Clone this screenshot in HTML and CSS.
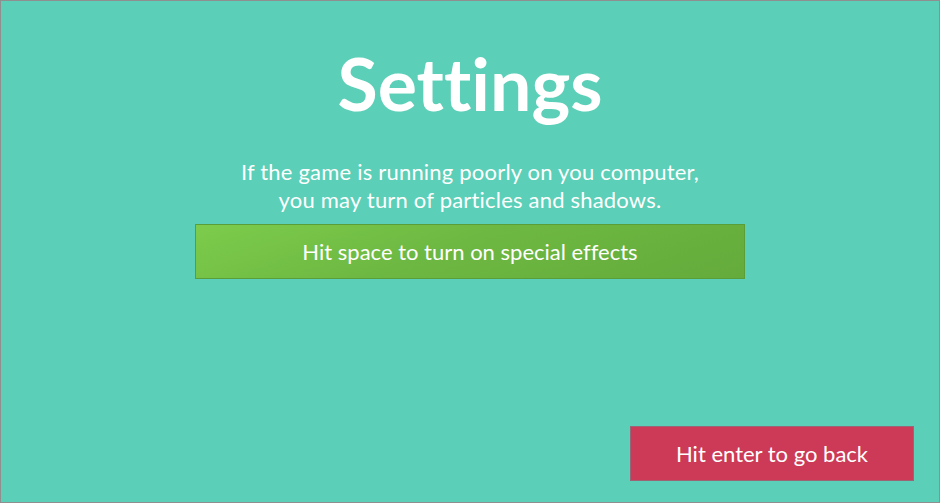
FILE: index.html
```html
<!DOCTYPE html>
<html>
<head>
<meta charset="utf-8">
<link rel="stylesheet" href="styles.css">
</head>
<body>
<div class="screen">
  <h1 class="title">Settings</h1>
  <p class="info">If the game is running poorly on you computer,<br>you may turn of particles and shadows.</p>
  <div class="btn-effects">Hit space to turn on special effects</div>
  <div class="spacer"></div>
  <div class="footer">
    <div class="btn-back">Hit enter to go back</div>
  </div>
</div>
</body>
</html>
```
FILE: styles.css
```css
html, body {
  margin: 0;
  padding: 0;
}
body {
  width: 940px;
  height: 503px;
  overflow: hidden;
}
.screen {
  box-sizing: border-box;
  width: 940px;
  height: 503px;
  border: 1px solid #8f8f8f;
  background: #5bcfb7;
  color: #ffffff;
  font-family: Lato, "Open Sans", sans-serif;
  font-variant-ligatures: none;
  display: flex;
  flex-direction: column;
  align-items: center;
}
.title {
  margin: 36px 0 0 0;
  font-size: 73.5px;
  font-weight: 700;
  line-height: 92px;
}
.info {
  margin: 29px 0 0 0;
  font-size: 22px;
  letter-spacing: 0.2px;
  line-height: 28px;
  text-align: center;
}
.btn-effects {
  box-sizing: border-box;
  margin-top: 10px;
  width: 550px;
  height: 55px;
  border: 1px solid #5a9e3a;
  background: linear-gradient(160deg, #7dcc4c 0%, #6db842 45%, #64ab3b 100%);
  font-size: 22px;
  display: flex;
  align-items: center;
  justify-content: center;
}
.spacer {
  flex: 1;
}
.footer {
  align-self: stretch;
  display: flex;
  justify-content: flex-end;
  padding: 0 25px 21px 0;
}
.btn-back {
  box-sizing: border-box;
  width: 284px;
  height: 55px;
  border: 1px solid #9b6575;
  background: #cc3a58;
  font-size: 22px;
  display: flex;
  align-items: center;
  justify-content: center;
}
```
